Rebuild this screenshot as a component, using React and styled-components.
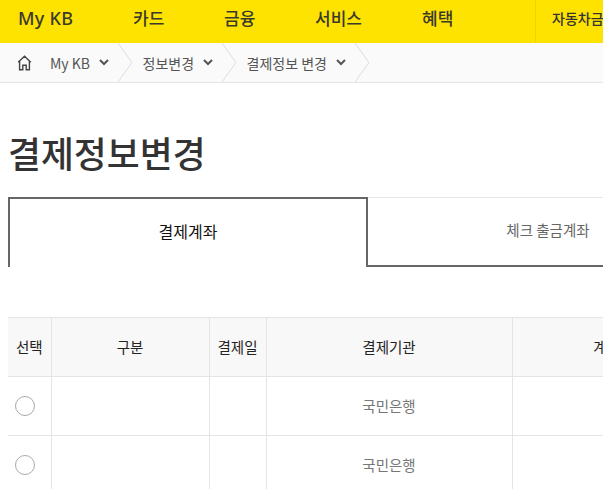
import styled, { createGlobalStyle } from "styled-components";

const GlobalStyle = createGlobalStyle`
    html, body {
        margin: 0;
        padding: 0;
        background: #fff;
        overflow: hidden;
    }
    body {
        font-family: "Noto Sans CJK KR", "Noto Sans", sans-serif;
        color: #333;
    }
`;

const menus = [
    { label: "카드", width: 91 },
    { label: "금융", width: 91 },
    { label: "서비스", width: 107 },
    { label: "혜택", width: 113 },
];

const crumbs = ["My KB", "정보변경", "결제정보 변경"];

const columns = [43, 158, 57, 246, 216, 84];
const rows = ["국민은행", "국민은행"];

function HomeIcon() {
    return (
        <svg width="15" height="16" viewBox="0 0 15 16" fill="none" stroke="#444" strokeWidth="1.4">
            <path d="M1.2 7.2 7.5 1.2l6.3 6M2.6 6.2v8.6h3.2v-4.6h3.4v4.6h3.2V6.2" />
        </svg>
    );
}

function Chevron() {
    return (
        <svg width="10" height="7" viewBox="0 0 10 7" fill="none" stroke="#555" strokeWidth="2">
            <path d="M1 1l4 4 4-4" />
        </svg>
    );
}

function Separator() {
    return (
        <svg width="15" height="39" viewBox="0 0 15 39" fill="none" stroke="#ddd" strokeWidth="1">
            <path d="M0 0l14 19.5L0 39" />
        </svg>
    );
}

function App() {
    return (
        <Page>
            <GlobalStyle />
            <Header>
                <Logo>My KB</Logo>
                {menus.map((menu) => (
                    <MenuItem key={menu.label} $width={menu.width}>
                        {menu.label}
                    </MenuItem>
                ))}
                <Extra>자동차금융</Extra>
            </Header>
            <Breadcrumb>
                <HomeLink>
                    <HomeIcon />
                </HomeLink>
                {crumbs.map((crumb) => (
                    <Crumb key={crumb}>
                        <CrumbLabel>{crumb}</CrumbLabel>
                        <Chevron />
                        <Separator />
                    </Crumb>
                ))}
            </Breadcrumb>
            <Content>
                <Title>결제정보변경</Title>
                <Tabs>
                    <Tab $active>결제계좌</Tab>
                    <Tab>체크 출금계좌</Tab>
                </Tabs>
                <Table>
                    <colgroup>
                        {columns.map((width, i) => (
                            <col key={i} width={width} />
                        ))}
                    </colgroup>
                    <thead>
                        <tr>
                            <Th>선택</Th>
                            <Th>구분</Th>
                            <Th>결제일</Th>
                            <Th>결제기관</Th>
                            <Th>계좌번호</Th>
                            <Th>예금주</Th>
                        </tr>
                    </thead>
                    <tbody>
                        {rows.map((bank, i) => (
                            <tr key={i}>
                                <Td>
                                    <Radio />
                                </Td>
                                <Td></Td>
                                <Td></Td>
                                <Td>{bank}</Td>
                                <Td></Td>
                                <Td></Td>
                            </tr>
                        ))}
                    </tbody>
                </Table>
            </Content>
        </Page>
    );
}

export default App;

const Page = styled.div`
    width: 603px;
    height: 489px;
    overflow: hidden;
`;

const Header = styled.div`
    display: flex;
    align-items: flex-start;
    width: 760px;
    height: 43px;
    padding-left: 18px;
    background-color: #ffe300;
    box-sizing: border-box;
    line-height: 36px;
`;

const Logo = styled.div`
    width: 115px;
    font-family: "Noto Sans", sans-serif;
    font-size: 18px;
    font-weight: 500;
    letter-spacing: 0.3px;
    color: #3a3a2c;
`;

const MenuItem = styled.div`
    width: ${(props) => props.$width}px;
    font-size: 17px;
    font-weight: 500;
    color: #3a3a2c;
`;

const Extra = styled.div`
    height: 43px;
    padding-left: 16px;
    border-left: 1px solid #eed400;
    font-size: 14px;
    font-weight: 500;
    color: #333;
`;

const Breadcrumb = styled.div`
    display: flex;
    align-items: center;
    height: 39px;
    background-color: #fafafa;
    border-bottom: 1px solid #e4e4e4;
`;

const HomeLink = styled.div`
    display: flex;
    width: 50px;
    padding-left: 17px;
    box-sizing: border-box;
`;

const Crumb = styled.div`
    display: flex;
    align-items: center;
    gap: 9px;
    margin-right: 9.5px;
    font-size: 14px;
    color: #555;
    white-space: nowrap;
`;

const CrumbLabel = styled.span`
    display: block;
`;

const Content = styled.div`
    padding: 0 0 0 8px;
`;

const Title = styled.h1`
    margin: 43px 0 -1px;
    height: 72px;
    font-size: 35.8px;
    line-height: 52px;
    font-weight: 500;
    color: #333;
`;

const Tabs = styled.div`
    display: flex;
    width: 720px;
`;

const Tab = styled.div`
    display: flex;
    align-items: center;
    justify-content: center;
    width: 360px;
    height: 70px;
    padding-bottom: 5px;
    box-sizing: border-box;
    font-size: ${(props) => (props.$active ? "16px" : "14.5px")};
    border-top: ${(props) => (props.$active ? "2px solid #666" : "1px solid #e5e5e5")};
    border-left: ${(props) => (props.$active ? "2px solid #666" : "none")};
    border-right: ${(props) => (props.$active ? "2px solid #666" : "none")};
    border-bottom: ${(props) => (props.$active ? "none" : "2px solid #666")};
    color: ${(props) => (props.$active ? "#111" : "#666")};
`;

const Table = styled.table`
    margin-top: 50px;
    width: 804px;
    table-layout: fixed;
    border-collapse: collapse;
    border-top: 1px solid #e4e4e4;
`;

const Th = styled.th`
    height: 56px;
    padding: 0 0 2px;
    background-color: #f8f8f8;
    border-bottom: 1px solid #e4e4e4;
    border-right: 1px solid #e4e4e4;
    font-size: 14.5px;
    font-weight: 400;
    color: #222;
`;

const Td = styled.td`
    height: 56px;
    padding: 0 0 2px;
    text-align: center;
    border-bottom: 1px solid #e4e4e4;
    border-right: 1px solid #e4e4e4;
    font-size: 14.5px;
    color: #777;
`;

const Radio = styled.span`
    display: block;
    width: 18px;
    height: 18px;
    margin: 2px 0 0 7px;
    border: 1px solid #aaa;
    border-radius: 50%;
`;
